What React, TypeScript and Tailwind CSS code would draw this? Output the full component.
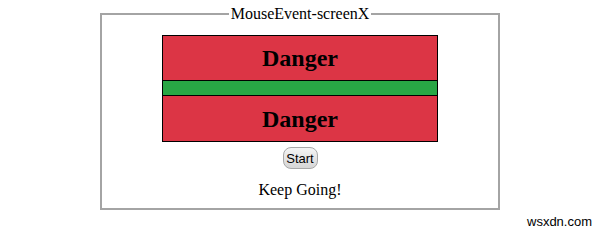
export default function App() {
  return (
    <div className="relative h-[230px] w-[600px] bg-white font-['Liberation_Serif',serif] text-black">
      <fieldset className="mx-auto mt-[5px] w-[400px] border-2 border-[#a4a4a4] px-2 pb-[9px] pt-[12px] text-center">
        <legend className="mx-auto px-[2px] text-[16px] leading-[18px]">MouseEvent-screenX</legend>
        <div className="mx-auto flex w-[276px] flex-col border border-black">
          <div className="flex h-[45px] items-center justify-center border-b border-black bg-[#dc3545]">
            <span className="text-[24px] font-bold leading-none">Danger</span>
          </div>
          <div className="h-[15px] border-b border-black bg-[#28a745]" />
          <div className="flex h-[45px] items-center justify-center bg-[#dc3545]">
            <span className="text-[24px] font-bold leading-none">Danger</span>
          </div>
        </div>
        <button className="mt-[5px] h-[22px] w-[35px] rounded-[8px] border border-[#a8a8a8] bg-gradient-to-b from-[#f4f4f4] to-[#d6d6d6] px-0 font-['Liberation_Sans',sans-serif] text-[13px] leading-none text-black">
          Start
        </button>
        <p className="mt-[11px] text-[16px] leading-[18px]">Keep Going!</p>
      </fieldset>
      <span className="absolute left-[527px] top-[209px] font-['Liberation_Sans',sans-serif] text-[13px] leading-[15px]">
        wsxdn.com
      </span>
    </div>
  );
}
